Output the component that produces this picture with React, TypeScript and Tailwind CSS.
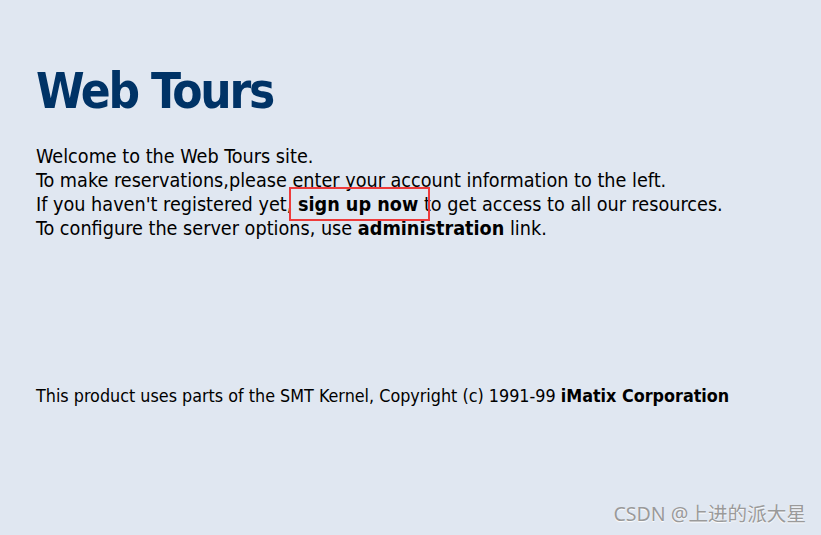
const App = () => {
  return (
    <div className="relative w-[821px] h-[535px] bg-[#E0E7F1] text-black overflow-hidden">
      <div className="pl-[36px] pt-[64px] font-['DejaVu_Sans_Condensed','DejaVu_Sans',sans-serif]">
        <h1 className="text-[49px] leading-[56px] font-bold tracking-[-2.2px] text-[#003366]">Web Tours</h1>

        <div className="mt-[25px] text-[19.65px] leading-[24px]">
          <div>Welcome to the Web Tours site.</div>
          <div>To make reservations,please enter your account information to the left.</div>
          <div>
            If you haven't registered yet,{" "}
            <span className="relative font-bold">
              sign up now
              <span className="absolute left-[-9px] right-[-12px] top-[-6px] bottom-[-5px] border-2 border-[#EE3B3B]" />
            </span>{" "}
            to get access to all our resources.
          </div>
          <div>
            To configure the server options, use <b>administration</b> link.
          </div>
        </div>

        <p className="mt-[144px] text-[17.8px] leading-[22px]">
          This product uses parts of the SMT Kernel, Copyright (c) 1991-99{" "}
          <b>iMatix Corporation</b>
        </p>
      </div>

      <div className="absolute right-[15px] bottom-[7px] text-[19.6px] text-[#9a9a9a] [text-shadow:0_1px_1px_#ffffff] font-['Noto_Sans','Noto_Sans_CJK_SC',sans-serif]">
        CSDN @上进的派大星
      </div>
    </div>
  );
};

export default App;
